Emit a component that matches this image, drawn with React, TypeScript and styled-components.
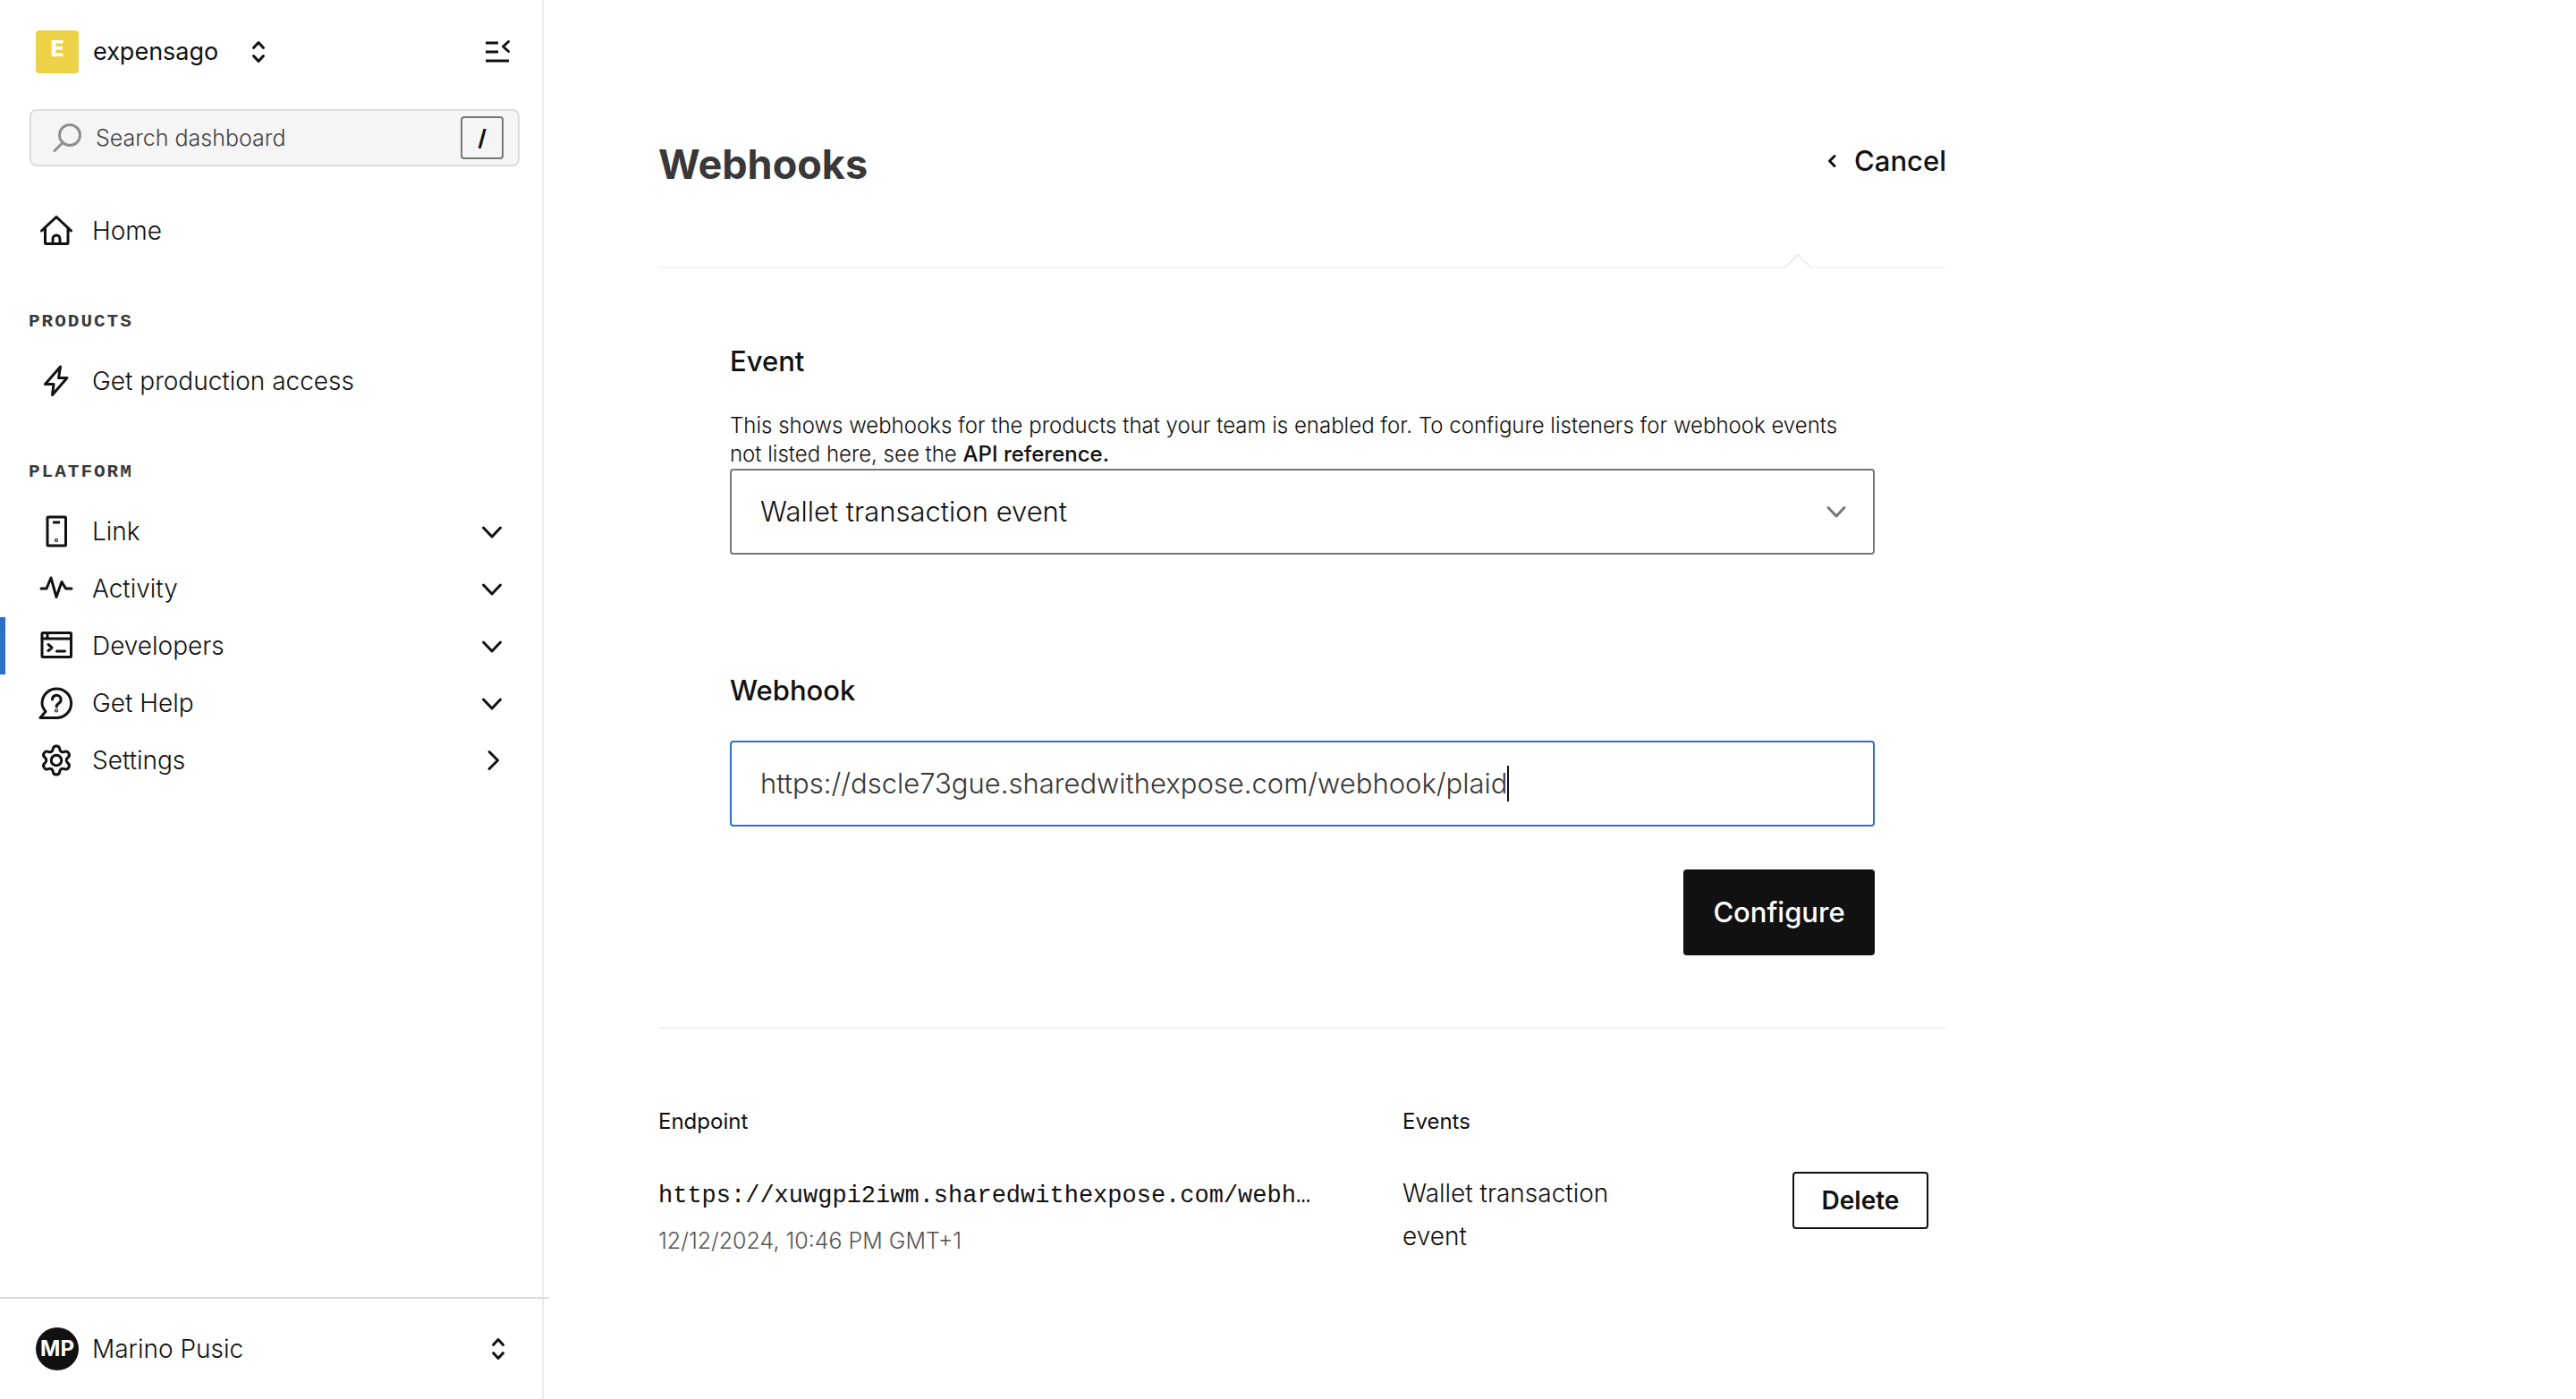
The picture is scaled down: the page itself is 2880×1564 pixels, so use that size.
import React from "react";
import styled, { createGlobalStyle } from "styled-components";

const sans = `Inter, "Liberation Sans", sans-serif`;
const mono = `"Liberation Mono", monospace`;

const GlobalStyle = createGlobalStyle`
  *, *::before, *::after { box-sizing: border-box; }
  body {
    margin: 0;
    background: #fff;
    color: #111;
    font-family: ${sans};
    font-size: 28px;
    font-weight: 300;
    line-height: 48px;
  }
  button, input, select { font: inherit; color: inherit; }
  h1, h2, p { margin: 0; }
`;

const Page = styled.div`
  display: grid;
  grid-template-columns: 608px minmax(0, 1fr);
  min-height: 100vh;
`;

/* ---------- Sidebar ---------- */

const Sidebar = styled.aside`
  display: flex;
  flex-direction: column;
  border-right: 2px solid #ebebeb;
`;

const TeamBar = styled.div`
  display: flex;
  align-items: center;
  justify-content: space-between;
  padding: 34px 36px 40px 40px;
`;

const PlainButton = styled.button`
  display: flex;
  align-items: center;
  padding: 0;
  border: 0;
  background: none;
  cursor: pointer;
`;

const TeamName = styled.span`
  margin: 0 38px 0 16px;
  font-size: 27px;
  font-weight: 400;
`;

const TeamBadge = styled.span`
  width: 48px;
  height: 48px;
  border-radius: 4px;
  background: #edd248;
  color: #fff;
  font-size: 25px;
  font-weight: 800;
  line-height: 40px;
  text-align: center;
`;

const SearchBox = styled.label`
  display: flex;
  align-items: center;
  height: 64px;
  margin: 0 25px 40px 33px;
  padding: 0 16px 0 24px;
  border: 2px solid #dcdcdc;
  border-radius: 8px;
  background: #f5f5f5;
`;

const SearchInput = styled.input`
  flex: 1;
  min-width: 0;
  margin-left: 16px;
  padding: 0;
  border: 0;
  outline: 0;
  background: none;
  font-size: 25px;
  &::placeholder { color: #444; opacity: 1; }
`;

const KeyHint = styled.kbd`
  width: 48px;
  height: 48px;
  border: 2px solid #777;
  border-radius: 4px;
  font-family: ${sans};
  font-size: 25px;
  font-weight: 700;
  line-height: 44px;
  text-align: center;
`;

const NavHeading = styled.h2`
  padding: 54px 0 18px 32px;
  color: #383838;
  font-family: ${mono};
  font-size: 21px;
  font-weight: 700;
  line-height: 32px;
  letter-spacing: 2px;
`;

const NavLink = styled.a<{ $active?: boolean }>`
  display: flex;
  align-items: center;
  gap: 22px;
  height: 64px;
  padding: 0 44px 0 39px;
  border-left: 6px solid ${(p) => (p.$active ? "#2b6fc9" : "transparent")};
  color: inherit;
  text-decoration: none;
  svg:last-child:not(:first-child) { margin-left: auto; }
`;

const UserBar = styled.div`
  display: flex;
  align-items: center;
  justify-content: space-between;
  margin: auto -8px 0 0;
  padding: 32px 50px 32px 40px;
  border-top: 2px solid #ddd;
`;

const User = styled.div`
  display: flex;
  align-items: center;
  gap: 15px;
`;

const Avatar = styled.span`
  width: 48px;
  height: 48px;
  border-radius: 50%;
  background: #111;
  color: #fff;
  font-size: 24px;
  font-weight: 700;
  text-align: center;
`;

/* ---------- Main ---------- */

const Main = styled.main`
  padding: 154px 128px 80px;
`;

const Content = styled.div`
  max-width: 1440px;
`;

const PageHeader = styled.header`
  display: flex;
  align-items: flex-start;
  justify-content: space-between;
  padding-bottom: 84px;
`;

const PageTitle = styled.h1`
  color: #383838;
  font-size: 45px;
  font-weight: 700;
  line-height: 60px;
`;

const CancelButton = styled(PlainButton)`
  gap: 20px;
  font-size: 31px;
  font-weight: 500;
  line-height: 52px;
`;

const FormPanel = styled.form`
  position: relative;
  display: flex;
  flex-direction: column;
  padding: 80px;
  border-top: 2px solid #f5f5f5;
  border-bottom: 2px solid #f5f5f5;
`;

const Notch = styled.svg`
  position: absolute;
  top: -16px;
  right: 150px;
`;

const FieldLabel = styled.label`
  margin-bottom: 32px;
  font-size: 31px;
  font-weight: 500;
  line-height: 48px;
`;

const Help = styled.p`
  font-size: 24px;
  line-height: 32px;
`;

const HelpLink = styled.a`
  color: inherit;
  font-weight: 500;
  text-decoration: none;
`;

const FieldBox = styled.div<{ $focused?: boolean }>`
  display: flex;
  align-items: center;
  height: 96px;
  padding: 0 30px 0 32px;
  border: 2px solid ${(p) => (p.$focused ? "#2a70cc" : "#767676")};
  border-radius: 4px;
  font-size: 31px;
`;

const EventSelect = styled.select`
  flex: 1;
  min-width: 0;
  height: 92px;
  margin-right: -22px;
  padding: 0;
  border: 0;
  outline: 0;
  background: none;
  appearance: none;
`;

const SelectField = styled(FieldBox)`
  margin-bottom: 128px;
  svg { pointer-events: none; }
`;

const UrlInput = styled.input`
  field-sizing: content;
  max-width: 100%;
  padding: 0;
  border: 0;
  outline: 0;
  background: none;
  color: #383838;
  caret-color: transparent;
`;

const Caret = styled.span`
  width: 2px;
  height: 40px;
  background: #111;
`;

const SubmitButton = styled.button`
  align-self: flex-end;
  min-width: 214px;
  height: 96px;
  margin-top: 48px;
  padding: 0 32px;
  border: 0;
  border-radius: 4px;
  background: #111;
  color: #fff;
  font-size: 31px;
  font-weight: 500;
`;

const Endpoints = styled.table`
  width: 100%;
  margin-top: 88px;
  border-collapse: collapse;
  table-layout: fixed;
`;

const HeadCell = styled.th<{ $width?: number }>`
  width: ${(p) => (p.$width ? `${p.$width}px` : "auto")};
  padding: 0 0 40px;
  font-size: 24px;
  font-weight: 400;
  line-height: 32px;
  text-align: left;
`;

const Cell = styled.td`
  padding: 0;
  vertical-align: baseline;
`;

const ActionCell = styled.td`
  padding: 0 20px 0 0;
  text-align: right;
  vertical-align: top;
`;

const EndpointUrl = styled.div`
  font-family: ${mono};
  font-size: 27px;
  font-weight: 400;
`;

const CreatedAt = styled.div`
  margin-top: 10px;
  color: #555;
  font-size: 25px;
  line-height: 32px;
`;

const DeleteButton = styled.button`
  display: inline-block;
  min-width: 152px;
  height: 64px;
  padding: 0 30px;
  border: 2px solid #111;
  border-radius: 4px;
  background: #fff;
  font-weight: 600;
  line-height: 56px;
  vertical-align: top;
`;

/* ---------- Icons ---------- */

const Glyph = styled.svg`
  flex: none;
  display: block;
  overflow: visible;
  fill: none;
  stroke: currentColor;
  stroke-width: 3px;
  stroke-linecap: round;
  stroke-linejoin: round;
`;

const NavGlyph = ({ children }: { children: React.ReactNode }) => (
  <Glyph width="36" height="36" viewBox="0 0 36 36" aria-hidden="true">{children}</Glyph>
);

const HomeIcon = () => (
  <NavGlyph>
    <path d="M1.5 18 18 2.5 34.5 18M5.5 15v16.5a1 1 0 0 0 1 1h23.5a1 1 0 0 0 1-1V15M14 32v-5a4 4 0 0 1 8 0v5" />
  </NavGlyph>
);
const BoltIcon = () => (
  <NavGlyph><path d="M22.5 2 5.5 21.5H15L13.5 33.5 30 14.5H20.5Z" /></NavGlyph>
);
const PhoneIcon = () => (
  <NavGlyph>
    <rect x="8" y="2" width="20.5" height="32" rx="1" />
    <path d="M14 8h8" strokeLinecap="butt" />
    <circle cx="18" cy="28" r="0.6" />
  </NavGlyph>
);
const PulseIcon = () => (
  <NavGlyph><path d="M1 18h6l5-12 6 21.500 6-17 4.500 7.500H35" /></NavGlyph>
);
const TerminalIcon = () => (
  <NavGlyph>
    <rect x="2" y="3.5" width="32.5" height="27" rx="1" />
    <path d="M2 10h32.5M8 4v6M9 16.5l4 3.5-4 3.5M18.500 24h9" />
  </NavGlyph>
);
const HelpIcon = () => (
  <NavGlyph>
    <path d="M18.5 34.5H0L6 27.5C3.5 24.5 2 21.5 2 18a16.300 16.300 0 1 1 16.500 16.500Z" />
    <path d="M13.5 14a4.8 4.8 0 1 1 7.5 4c-2 1.3-2.8 2-2.8 4" />
    <circle cx="18" cy="26.5" r="0.6" />
  </NavGlyph>
);
const GearIcon = () => (
  <Glyph width="36" height="36" viewBox="0.75 0.75 22.5 22.5" aria-hidden="true">
    <path
      vectorEffect="non-scaling-stroke"
      d="M9.671 4.136a2.34 2.34 0 0 1 4.659 0 2.34 2.34 0 0 0 3.319 1.915 2.34 2.34 0 0 1 2.33 4.033 2.34 2.34 0 0 0 0 3.831 2.34 2.34 0 0 1-2.33 4.033 2.34 2.34 0 0 0-3.319 1.915 2.34 2.34 0 0 1-4.659 0 2.34 2.34 0 0 0-3.32-1.915 2.34 2.34 0 0 1-2.33-4.033 2.34 2.34 0 0 0 0-3.831A2.34 2.34 0 0 1 6.35 6.051a2.34 2.34 0 0 0 3.319-1.915"
    />
    <circle vectorEffect="non-scaling-stroke" cx="12" cy="12" r="3.6" />
  </Glyph>
);
const SearchIcon = () => (
  <Glyph width="32" height="32" viewBox="0 0 32 32" color="#8f8f8f" aria-hidden="true">
    <circle cx="19" cy="13" r="11.5" />
    <path d="M11 21.5 2 30.5" />
  </Glyph>
);
const SortIcon = () => (
  <Glyph width="14" height="24" viewBox="0 0 14 24" aria-hidden="true">
    <path d="m1.5 7.5 5.5-6 5.5 6M1.5 16.5l5.5 6 5.5-6" />
  </Glyph>
);
const CollapseIcon = () => (
  <Glyph width="28" height="26" viewBox="0 0 28 26" aria-hidden="true">
    <path strokeLinecap="butt" d="M1 3h14M1 13h14M1 23h26" />
    <path d="m26.5 1.5-6 5.5 6 5.5" />
  </Glyph>
);
const ChevronDown = () => (
  <Glyph width="24" height="24" viewBox="0 0 24 24" aria-hidden="true"><path d="m2.5 8 9.5 10 9.5-10" /></Glyph>
);
const ChevronRight = () => (
  <Glyph width="24" height="24" viewBox="0 0 24 24" aria-hidden="true"><path d="m9 2.5 9.5 9.5L9 21.5" /></Glyph>
);
const SelectChevron = () => (
  <Glyph width="22" height="14" viewBox="0 0 22 14" color="#777" aria-hidden="true"><path d="m2 2.5 9 9.5 9-9.5" /></Glyph>
);
const BackChevron = () => (
  <Glyph width="10" height="14" viewBox="0 0 10 14" aria-hidden="true"><path d="M8 1.5 2.5 7 8 12.5" /></Glyph>
);

/* ---------- Data ---------- */

const platformItems = [
  { label: "Link", Icon: PhoneIcon, Chevron: ChevronDown },
  { label: "Activity", Icon: PulseIcon, Chevron: ChevronDown },
  { label: "Developers", Icon: TerminalIcon, Chevron: ChevronDown, active: true },
  { label: "Get Help", Icon: HelpIcon, Chevron: ChevronDown },
  { label: "Settings", Icon: GearIcon, Chevron: ChevronRight },
];

const endpoints = [
  {
    url: "https://xuwgpi2iwm.sharedwithexpose.com/webh…",
    created: "12/12/2024, 10:46 PM GMT+1",
    event: "Wallet transaction event",
  },
];

export default function App() {
  const [url, setUrl] = React.useState("https://dscle73gue.sharedwithexpose.com/webhook/plaid");

  return (
    <>
      <GlobalStyle />
      <Page>
        <Sidebar>
          <TeamBar>
            <PlainButton type="button">
              <TeamBadge>E</TeamBadge>
              <TeamName>expensago</TeamName>
              <SortIcon />
            </PlainButton>
            <PlainButton type="button" aria-label="Collapse sidebar">
              <CollapseIcon />
            </PlainButton>
          </TeamBar>
          <SearchBox>
            <SearchIcon />
            <SearchInput type="text" placeholder="Search dashboard" aria-label="Search dashboard" />
            <KeyHint>/</KeyHint>
          </SearchBox>
          <nav>
            <NavLink href="#home"><HomeIcon />Home</NavLink>
            <NavHeading>PRODUCTS</NavHeading>
            <NavLink href="#production"><BoltIcon />Get production access</NavLink>
            <NavHeading>PLATFORM</NavHeading>
            {platformItems.map(({ label, Icon, Chevron, active }) => (
              <NavLink key={label} href={`#${label}`} $active={active}>
                <Icon />
                {label}
                <Chevron />
              </NavLink>
            ))}
          </nav>
          <UserBar>
            <User>
              <Avatar>MP</Avatar>
              Marino Pusic
            </User>
            <PlainButton type="button" aria-label="Switch account">
              <SortIcon />
            </PlainButton>
          </UserBar>
        </Sidebar>

        <Main>
          <Content>
            <PageHeader>
              <PageTitle>Webhooks</PageTitle>
              <CancelButton type="button">
                <BackChevron />
                Cancel
              </CancelButton>
            </PageHeader>

            <FormPanel onSubmit={(e) => e.preventDefault()}>
              <Notch width="32" height="16" viewBox="0 0 32 16" aria-hidden="true">
                <path d="M0.5 16 16 0.8 31.5 16" fill="#fff" stroke="#e6e6ec" strokeWidth="1.5" />
              </Notch>
              <FieldLabel htmlFor="event">Event</FieldLabel>
              <Help>
                This shows webhooks for the products that your team is enabled for. To configure
                listeners for webhook events not listed here, see the{" "}
                <HelpLink href="#api">API reference.</HelpLink>
              </Help>
              <SelectField>
                <EventSelect id="event" defaultValue="wallet">
                  <option value="wallet">Wallet transaction event</option>
                </EventSelect>
                <SelectChevron />
              </SelectField>
              <FieldLabel htmlFor="webhook">Webhook</FieldLabel>
              <FieldBox $focused>
                <UrlInput
                  id="webhook"
                  type="text"
                  spellCheck={false}
                  value={url}
                  onChange={(e) => setUrl(e.target.value)}
                />
                <Caret />
              </FieldBox>
              <SubmitButton type="submit">Configure</SubmitButton>
            </FormPanel>

            <Endpoints>
              <thead>
                <tr>
                  <HeadCell scope="col">Endpoint</HeadCell>
                  <HeadCell scope="col" $width={288}>Events</HeadCell>
                  <HeadCell $width={320} aria-label="Actions" />
                </tr>
              </thead>
              <tbody>
                {endpoints.map((endpoint) => (
                  <tr key={endpoint.url}>
                    <Cell>
                      <EndpointUrl>{endpoint.url}</EndpointUrl>
                      <CreatedAt>{endpoint.created}</CreatedAt>
                    </Cell>
                    <Cell>{endpoint.event}</Cell>
                    <ActionCell>
                      <DeleteButton type="button">Delete</DeleteButton>
                    </ActionCell>
                  </tr>
                ))}
              </tbody>
            </Endpoints>
          </Content>
        </Main>
      </Page>
    </>
  );
}
